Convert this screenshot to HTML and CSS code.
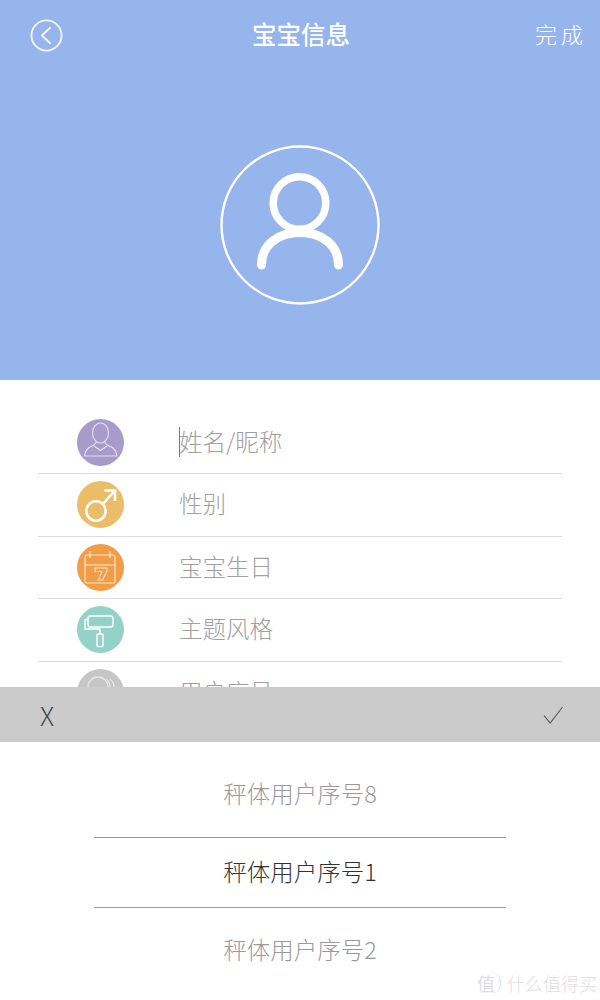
FILE: index.html
```html
<!DOCTYPE html>
<html lang="zh-CN">
<head>
  <meta charset="UTF-8">
  <meta name="viewport" content="width=device-width, initial-scale=1.0">
  <title>宝宝信息</title>
  <link rel="stylesheet" href="styles.css">
</head>
<body>
  <div class="page">
    <header class="hero">
      <div class="topbar">
        <svg class="back-icon" viewBox="0 0 32 32" fill="none" stroke="#f2f6fd" stroke-width="1.8">
          <circle cx="16" cy="16" r="14.6"/>
          <path d="M19.5 8.5 L11.5 16 L19.5 23.5" stroke-linecap="round" stroke-linejoin="round"/>
        </svg>
        <h1 class="title">宝宝信息</h1>
        <span class="done">完成</span>
      </div>
      <div class="avatar">
        <svg viewBox="0 0 160 160" fill="none" stroke="#fff">
          <circle cx="80" cy="80" r="78.5" stroke-width="2.4"/>
          <circle cx="79.5" cy="58" r="26.3" stroke-width="7.5"/>
          <path d="M41.5 120 C41.5 100 58 87.5 80 87.5 C102 87.5 118.5 100 118.5 120" stroke-width="9" stroke-linecap="round"/>
        </svg>
      </div>
    </header>

    <main class="form">
      <div class="row">
        <span class="icon purple">
          <svg viewBox="0 0 47 47" fill="none" stroke="#e6e0f2" stroke-width="1.1">
            <ellipse cx="23.5" cy="14" rx="8" ry="10"/>
            <path d="M19 23 C19 26 14 27 11.5 29 C9 31 8 33.5 7.5 37 L40 37 C39.5 33.5 38.5 31 36 29 C33.5 27 28 26 28 23"/>
            <path d="M17 27 L23.5 31.5 L30 27"/>
          </svg>
        </span>
        <span class="label"><i class="caret"></i>姓名/昵称</span>
      </div>
      <div class="row">
        <span class="icon yellow">
          <svg viewBox="0 0 47 47" fill="none" stroke="#fff" stroke-width="2.6">
            <circle cx="19" cy="30" r="9.7"/>
            <path d="M26 23 L37 10.5 M27.5 9.5 L38 9.5 L38 20"/>
          </svg>
        </span>
        <span class="label">性别</span>
      </div>
      <div class="row">
        <span class="icon orange">
          <svg viewBox="0 0 47 47" fill="none" stroke="#fde3c2" stroke-width="1.2">
            <path d="M10 11 L36 11 Q38 11 38 13 L38 37 Q38 39 36 39 L10 39 Q8 39 8 37 L8 13 Q8 11 10 11 Z"/>
            <path d="M8 21 L38 21"/>
            <path d="M13 7 L13 14 M33 7 L33 14"/>
            <path d="M18 24 L30 24 L30 27 L25.5 36 L21 36 L25 27.5 L18 27.5 Z" stroke-linejoin="round"/>
          </svg>
        </span>
        <span class="label">宝宝生日</span>
      </div>
      <div class="row">
        <span class="icon teal">
          <svg viewBox="0 0 47 47" fill="none" stroke="#fff" stroke-width="1.4">
            <rect x="11" y="10" width="25" height="11" rx="2.5"/>
            <path d="M11 13.5 L8 13.5 L8 23 L23 23 L23 28"/>
            <rect x="20" y="28" width="6" height="12.5" rx="1"/>
          </svg>
        </span>
        <span class="label">主题风格</span>
      </div>
      <div class="row">
        <span class="icon grey">
          <svg viewBox="0 0 47 47" fill="none" stroke="#e6e6e6" stroke-width="1.3">
            <circle cx="21" cy="18" r="10"/>
            <path d="M29 10 A10 10 0 0 1 29 26 M33 10 A10 10 0 0 1 33 26"/>
          </svg>
        </span>
        <span class="label">用户序号</span>
      </div>
    </main>

    <section class="sheet">
      <div class="sheet-bar">
        <span class="cancel">X</span>
        <svg class="confirm" viewBox="0 0 22 20" fill="none" stroke="#555" stroke-width="1.1">
          <path d="M1 10 L7.5 18 L20.5 1"/>
        </svg>
      </div>
      <div class="picker">
        <div class="option">秤体用户序号8</div>
        <div class="option current">秤体用户序号1</div>
        <div class="option">秤体用户序号2</div>
      </div>
    </section>

    <div class="watermark">
      <span class="mark">值</span>
      <span>什么值得买</span>
    </div>
  </div>
</body>
</html>
```

FILE: styles.css
```css
* {
  box-sizing: border-box;
}

body {
  margin: 0;
  background: #fff;
  font-family: "Noto Sans CJK SC", "Liberation Sans", sans-serif;
}

.page {
  position: relative;
  width: 600px;
  height: 1000px;
  overflow: hidden;
}

.hero {
  height: 380px;
  background-color: #95b5ec;
  padding-top: 18px;
}

.topbar {
  display: flex;
  align-items: center;
  justify-content: space-between;
  height: 34px;
  padding: 0 13px 0 30px;
}

.back-icon {
  width: 33px;
  height: 33px;
}

.title {
  margin: 0 0 4px 4px;
  font-size: 24.5px;
  font-weight: 500;
  color: #fff;
}

.done {
  margin-bottom: 4px;
  font-size: 22px;
  font-weight: 300;
  letter-spacing: 4px;
  color: #fff;
}

.avatar {
  width: 160px;
  height: 160px;
  margin: 93px auto 0;
}

.avatar svg {
  display: block;
  width: 160px;
  height: 160px;
}

.form {
  padding: 31.5px 38px 0;
}

.row {
  display: flex;
  align-items: center;
  height: 62.5px;
  padding-left: 39px;
  border-bottom: 1px solid #dcdcdc;
}

.icon {
  display: block;
  flex: none;
  width: 47px;
  height: 47px;
  border-radius: 50%;
}

.icon svg {
  display: block;
  width: 47px;
  height: 47px;
}

.purple { background-color: #a79bcb; }
.yellow { background-color: #ebbd68; }
.orange { background-color: #f09c48; }
.teal { background-color: #94d2c8; }
.grey { background-color: #c6c6c6; }

.label {
  position: relative;
  margin: 0 0 3px 55px;
  font-size: 23.5px;
  font-weight: 300;
  color: #a0a0a0;
}

.caret {
  position: absolute;
  left: 0;
  top: 3px;
  width: 1px;
  height: 30px;
  background-color: #777;
}

.sheet {
  position: absolute;
  left: 0;
  right: 0;
  top: 687px;
  bottom: 0;
  background-color: #fff;
}

.sheet-bar {
  display: flex;
  align-items: center;
  justify-content: space-between;
  height: 55px;
  padding: 0 36px 0 40px;
  background-color: #cbcbcb;
}

.cancel {
  font-size: 26px;
  font-weight: 300;
  color: #444;
}

.confirm {
  width: 21px;
  height: 19px;
  margin-top: 1px;
}

.picker {
  display: flex;
  flex-direction: column;
  padding-top: 16px;
}

.option {
  height: 69px;
  margin: 0 94px;
  display: flex;
  align-items: center;
  justify-content: center;
  font-size: 23.5px;
  font-weight: 300;
  color: #999;
}

.option.current {
  height: 71px;
  margin-top: 10px;
  margin-bottom: 6px;
  padding-bottom: 3px;
  border-top: 1px solid #9a9a9a;
  border-bottom: 1px solid #9a9a9a;
  color: #333;
}

.watermark {
  position: absolute;
  right: 3px;
  bottom: 4px;
  display: flex;
  align-items: center;
  gap: 6px;
  font-size: 18px;
  font-weight: 300;
  color: #dedede;
}

.mark {
  width: 24px;
  height: 24px;
  border-right: 1px solid #dedede;
  border-radius: 50%;
  font-size: 18px;
  font-weight: 400;
  line-height: 24px;
}
```
